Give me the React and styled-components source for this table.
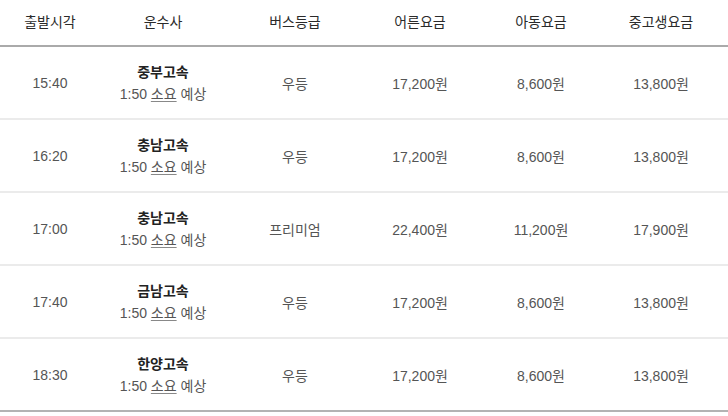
import React from 'react'
import styled, { createGlobalStyle } from 'styled-components'

const GlobalStyle = createGlobalStyle`
  body {
    margin: 0;
    background: #fff;
    font-family: "Liberation Sans", "Noto Sans CJK KR", sans-serif;
  }
`

const ScheduleTable = styled.table`
  width: 728px;
  border-collapse: collapse;
  table-layout: fixed;
  border-bottom: 2px solid #b3b3b3;
`

const HeadCell = styled.th`
  height: 41px;
  padding: 0 0 4px;
  font-size: 14px;
  font-weight: normal;
  color: #2a2a2a;
  text-align: center;
  border-bottom: 2px solid #aaa;
`

const Row = styled.tr`
  & + & td {
    border-top: 2px solid #ebebeb;
  }
`

const Cell = styled.td`
  height: 71px;
  padding: 0;
  font-size: 14px;
  color: #555;
  text-align: center;
  vertical-align: middle;
`

const Company = styled.div`
  font-weight: bold;
  color: #222;
  line-height: 22px;
`

const Duration = styled.div`
  line-height: 22px;
  color: #555;
`

const Underlined = styled.span`
  text-decoration: underline;
  text-decoration-color: #888;
  text-underline-offset: 2px;
`

const columns = [100, 126, 138, 112, 130, 110, 12]
const headers = ['출발시각', '운수사', '버스등급', '어른요금', '아동요금', '중고생요금']

const schedule = [
  { time: '15:40', company: '중부고속', grade: '우등', adult: '17,200원', child: '8,600원', teen: '13,800원' },
  { time: '16:20', company: '충남고속', grade: '우등', adult: '17,200원', child: '8,600원', teen: '13,800원' },
  { time: '17:00', company: '충남고속', grade: '프리미엄', adult: '22,400원', child: '11,200원', teen: '17,900원' },
  { time: '17:40', company: '금남고속', grade: '우등', adult: '17,200원', child: '8,600원', teen: '13,800원' },
  { time: '18:30', company: '한양고속', grade: '우등', adult: '17,200원', child: '8,600원', teen: '13,800원' },
]

export default function App() {
  return (
    <>
      <GlobalStyle />
      <ScheduleTable>
        <colgroup>
          {columns.map((w, i) => (
            <col key={i} style={{ width: w }} />
          ))}
        </colgroup>
        <thead>
          <tr>
            {headers.map(h => (
              <HeadCell key={h}>{h}</HeadCell>
            ))}
            <HeadCell />
          </tr>
        </thead>
        <tbody>
          {schedule.map(bus => (
            <Row key={bus.time}>
              <Cell>{bus.time}</Cell>
              <Cell>
                <Company>{bus.company}</Company>
                <Duration>
                  1:50 <Underlined>소요</Underlined> 예상
                </Duration>
              </Cell>
              <Cell>{bus.grade}</Cell>
              <Cell>{bus.adult}</Cell>
              <Cell>{bus.child}</Cell>
              <Cell>{bus.teen}</Cell>
              <Cell />
            </Row>
          ))}
        </tbody>
      </ScheduleTable>
    </>
  )
}
